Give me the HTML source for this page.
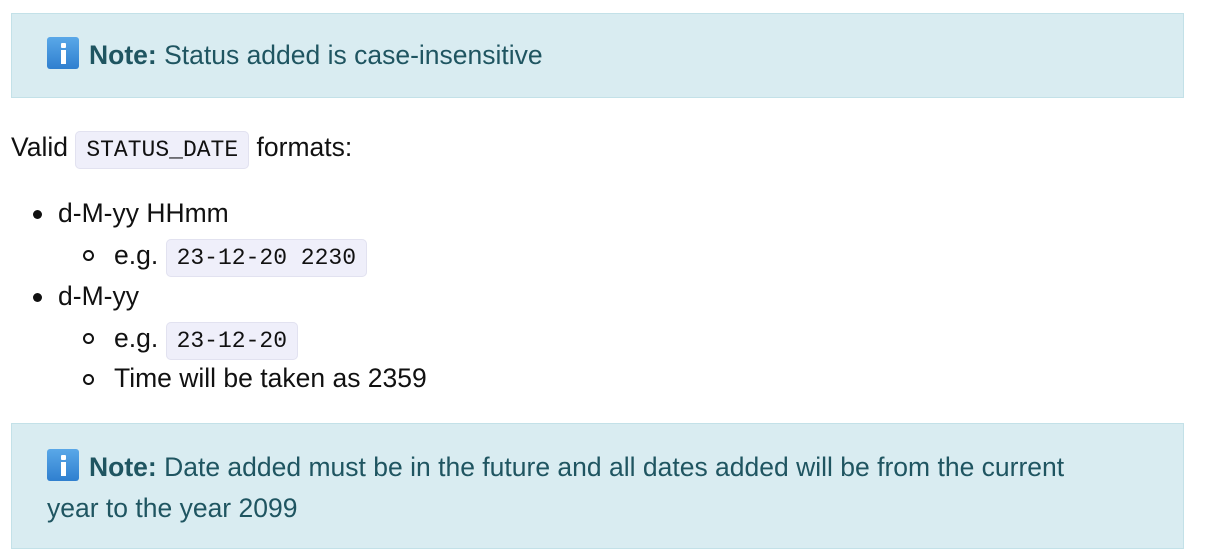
<!DOCTYPE html>
<html><head><style>
body{margin:0;width:1206px;height:556px;background:#fff;font-family:"Liberation Sans",sans-serif;font-size:26.5px;color:#111;position:relative;overflow:hidden}
.note{position:absolute;left:11px;width:1171px;background:#d9ecf1;border:1px solid #c3e1e8;color:#1f5561}
.note .t{position:absolute;left:35px;line-height:41px}
.ic{display:inline-block;width:32px;height:32px;border-radius:3px;background:linear-gradient(#5aa8e8,#2f7fcf);vertical-align:-5px;position:relative;margin-right:10px}
.ic:before{content:"";position:absolute;left:14px;top:6px;width:5px;height:5px;background:#fff;border-radius:1px}
.ic:after{content:"";position:absolute;left:14px;top:13px;width:5px;height:14px;background:#fff}
.r{position:absolute;line-height:41px;white-space:nowrap}
code{font-family:"Liberation Mono",monospace;font-size:23px;background:#efeffa;border:1px solid #e2e2f0;border-radius:5px;padding:5px 10px}
.d{position:absolute;width:9px;height:9px;border-radius:50%;background:#111}
.c{position:absolute;width:7px;height:7px;border-radius:50%;border:2px solid #111}
</style></head><body>
<div class="note" style="top:13px;height:83px"><div class="t" style="top:21px"><span class="ic"></span><b>Note:</b> Status added is case-insensitive</div></div>
<div class="r" style="left:11px;top:127px">Valid <code>STATUS_DATE</code> formats:</div>
<div class="d" style="left:33px;top:210px"></div><div class="r" style="left:58px;top:193px">d-M-yy HHmm</div>
<div class="c" style="left:83px;top:250px"></div><div class="r" style="left:114px;top:235px">e.g. <code>23-12-20 2230</code></div>
<div class="d" style="left:33px;top:293px"></div><div class="r" style="left:58px;top:276px">d-M-yy</div>
<div class="c" style="left:83px;top:333px"></div><div class="r" style="left:114px;top:318px">e.g. <code>23-12-20</code></div>
<div class="c" style="left:83px;top:374px"></div><div class="r" style="left:114px;top:358px">Time will be taken as 2359</div>
<div class="note" style="top:423px;height:124px"><div class="t" style="top:23px;width:1100px;white-space:normal"><span class="ic"></span><b>Note:</b> Date added must be in the future and all dates added will be from the current<br>year to the year 2099</div></div>
</body></html>
